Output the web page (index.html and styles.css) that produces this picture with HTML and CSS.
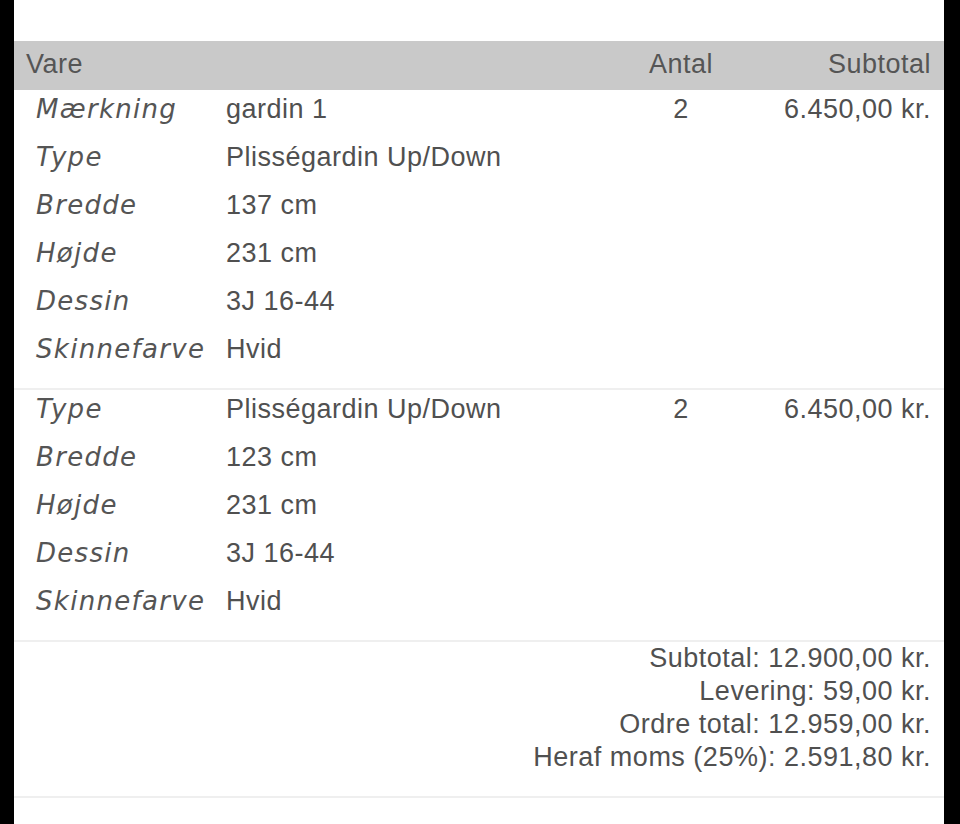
FILE: index.html
```html
<!DOCTYPE html>
<html lang="da">
<head>
<meta charset="utf-8">
<title>Ordre</title>
<link rel="stylesheet" href="styles.css">
</head>
<body>
<div class="page">
  <div class="top"></div>
  <div class="grid head">
    <div class="c-vare">Vare</div>
    <div class="c-antal">Antal</div>
    <div class="c-sub">Subtotal</div>
  </div>

  <div class="item">
    <div class="grid row">
      <div class="c-vare"><span class="lbl">Mærkning</span><span class="val">gardin 1</span></div>
      <div class="c-antal">2</div>
      <div class="c-sub">6.450,00 kr.</div>
    </div>
    <div class="grid row"><div class="c-vare"><span class="lbl">Type</span><span class="val">Plisségardin Up/Down</span></div></div>
    <div class="grid row"><div class="c-vare"><span class="lbl">Bredde</span><span class="val">137 cm</span></div></div>
    <div class="grid row"><div class="c-vare"><span class="lbl">Højde</span><span class="val">231 cm</span></div></div>
    <div class="grid row"><div class="c-vare"><span class="lbl">Dessin</span><span class="val">3J 16-44</span></div></div>
    <div class="grid row"><div class="c-vare"><span class="lbl">Skinnefarve</span><span class="val">Hvid</span></div></div>
  </div>

  <div class="item">
    <div class="grid row">
      <div class="c-vare"><span class="lbl">Type</span><span class="val">Plisségardin Up/Down</span></div>
      <div class="c-antal">2</div>
      <div class="c-sub">6.450,00 kr.</div>
    </div>
    <div class="grid row"><div class="c-vare"><span class="lbl">Bredde</span><span class="val">123 cm</span></div></div>
    <div class="grid row"><div class="c-vare"><span class="lbl">Højde</span><span class="val">231 cm</span></div></div>
    <div class="grid row"><div class="c-vare"><span class="lbl">Dessin</span><span class="val">3J 16-44</span></div></div>
    <div class="grid row"><div class="c-vare"><span class="lbl">Skinnefarve</span><span class="val">Hvid</span></div></div>
  </div>

  <div class="totals">
    <div>Subtotal: 12.900,00 kr.</div>
    <div>Levering: 59,00 kr.</div>
    <div>Ordre total: 12.959,00 kr.</div>
    <div>Heraf moms (25%): 2.591,80 kr.</div>
  </div>
</div>
</body>
</html>
```

FILE: styles.css
```css
html, body {
  margin: 0;
  padding: 0;
  background: #000;
  height: 100%;
}
.page {
  margin: 0 16px 0 14px;
  background: #fff;
  min-height: 100%;
  font-family: "Liberation Sans", Arial, sans-serif;
  font-size: 27px;
  letter-spacing: 0.5px;
  color: #505050;
}
.top {
  height: 41px;
}
.grid {
  display: grid;
  grid-template-columns: 1fr 120px 190px;
  padding: 0 13px 0 12px;
}
.head {
  background: #c9c9c9;
  height: 49px;
  line-height: 47px;
  color: #555;
}
.c-antal {
  text-align: center;
}
.c-sub {
  text-align: right;
}
.item {
  padding-bottom: 10px;
  border-bottom: 2px solid #efefef;
}
.row {
  height: 48px;
  line-height: 38px;
}
.lbl {
  display: inline-block;
  width: 190px;
  padding-left: 10px;
  font-family: "DejaVu Sans", Verdana, sans-serif;
  font-style: italic;
  font-size: 26px;
  letter-spacing: 1.3px;
  color: #555;
}
.val {
  color: #505050;
}
.totals {
  padding: 0 13px 22px 0;
  text-align: right;
  line-height: 33px;
  border-bottom: 2px solid #efefef;
}
```
